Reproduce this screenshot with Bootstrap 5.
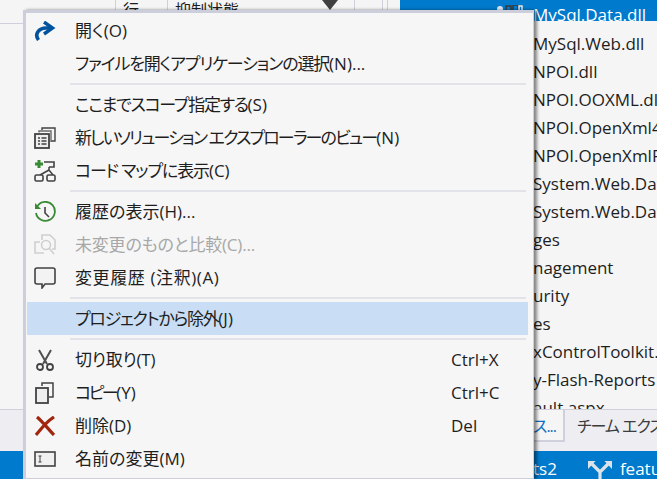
<!DOCTYPE html>
<html lang="ja">
<head>
<meta charset="utf-8">
<link href="https://cdn.jsdelivr.net/npm/bootstrap@5.3.0/dist/css/bootstrap.min.css" rel="stylesheet">
<style>
html,body{margin:0;height:479px;width:657px;overflow:hidden;background:#f5f5f5}
body{font-family:"Open Sans","Noto Sans CJK JP",sans-serif;font-size:17px;font-feature-settings:"palt";color:#1e1e1e}
.vs-stage{width:657px;height:479px;position:relative;overflow:hidden}
.vs-main{height:409px}
.left-pane{width:400px;flex:none;background:#f5f5f5}
.hdr-row{height:24px;border-bottom:1px solid #cfd0dc;font-size:16px;line-height:20px;overflow:hidden}
.hdr-cell{height:24px;border-right:1px solid #cfd0dc;padding-left:7px;white-space:nowrap;overflow:hidden}
.w1{width:116px;padding:0}.w2{width:52px}.w3{width:187px;position:relative}.w4{width:28px;padding:0}.w5{width:5px;padding:0}.w6{width:12px;padding:0;border:0}
.sort-tri{position:absolute;left:154px;top:0;width:0;height:0;border-left:8px solid transparent;border-right:8px solid transparent;border-top:10px solid #404040}
.tree-pane{flex:1;min-width:0;overflow:hidden;background:#f5f5f5}
.tree-row{height:28px;line-height:28px;padding-left:133px;white-space:nowrap;font-size:17px}
.tree-sel{background:#007acc;color:#fff;height:21px;line-height:30px;margin-bottom:9px;overflow:hidden;position:relative}
.peek-ic{position:absolute;left:97px;top:5px}
.tab-strip{height:42px;background:#eeeef2;border-top:1px solid #cfd0dc;padding-left:530px;font-size:16px;white-space:nowrap;overflow:hidden}
.tab-sel{width:35px;height:32px;flex:none;background:#f5f5f5;border-right:2px solid #cfd0dc;border-bottom:2px solid #cfd0dc;color:#0e70c0;padding-left:3px;line-height:33px;overflow:hidden;letter-spacing:-1px}
.tab-team{padding-left:12px;line-height:33px;color:#3c3c3c;letter-spacing:-1px}
.status-strip{height:28px;background:#007acc;color:#fff;font-size:17px;line-height:36px;padding-left:533px;white-space:nowrap;overflow:hidden;gap:31px}
.y-ic{flex:none;align-self:flex-start;margin-top:9px}
.vs-menu.dropdown-menu{display:block;position:absolute;left:23px;top:10px;width:511px;height:469px;min-width:0;background:#f6f6f6;border:3px solid #cccedb;border-right-width:1px;border-bottom-width:1px;border-radius:0;box-shadow:3px 0 3px rgba(0,0,0,.45);padding:1px 5px 0 1px;margin:0;font-size:17px;color:#1e1e1e}
.vs-menu .dropdown-item{height:33px;padding:0 0 0 1px;display:flex;align-items:center;white-space:nowrap;position:relative;color:#1e1e1e;line-height:22px}
.vs-menu .dropdown-item.disabled{color:#a8a8a8}
.vs-menu .dropdown-item.hot{background:#c9def5}
.vs-menu .dropdown-divider{height:2px;border:0;background:#e1e3e8;margin:3px 2px 3px 43px;opacity:1}
.ic{width:47px;flex:none;display:flex;justify-content:center;padding-right:13px}
.ic svg{display:block;flex:none}
.key{position:absolute;left:424px;font-size:17px;letter-spacing:0}
.sp-a{letter-spacing:-1.150px}
.sp-b{letter-spacing:-1.850px}
.sp-c{letter-spacing:-1.300px}
.sp-d{letter-spacing:-2.500px}
.sp-e{letter-spacing:-.2px}
.sp-f{letter-spacing:.6px}
.lat{letter-spacing:0}
</style>
</head>
<body>
<div class="vs-stage">
  <div class="vs-main d-flex">
    <div class="left-pane">
      <div class="hdr-row d-flex">
        <div class="hdr-cell w1"></div>
        <div class="hdr-cell w2">行</div>
        <div class="hdr-cell w3">抑制状態<span class="sort-tri"></span></div>
        <div class="hdr-cell w4"></div>
        <div class="hdr-cell w5"></div>
        <div class="hdr-cell w6"></div>
      </div>
    </div>
    <div class="tree-pane">
      <div class="tree-row tree-sel">MySql.Data.dll<svg class="peek-ic" width="26" height="6" viewBox="0 0 26 6"><circle cx="3" cy="4" r="3" fill="#dfe8f2"/><path d="M9 6V1h5v5M16 6V0h5v6" fill="none" stroke="#3a3a3a" stroke-width="1.500"/><path d="M22 6V1h3v5" fill="none" stroke="#e8e8e8" stroke-width="1.500"/></svg></div>
      <div class="tree-row">MySql.Web.dll</div>
      <div class="tree-row">NPOI.dll</div>
      <div class="tree-row">NPOI.OOXML.dll</div>
      <div class="tree-row">NPOI.OpenXml4Net.dll</div>
      <div class="tree-row">NPOI.OpenXmlFormats.dll</div>
      <div class="tree-row">System.Web.DataVisualization</div>
      <div class="tree-row">System.Web.DataVisualization</div>
      <div class="tree-row">ges</div>
      <div class="tree-row">nagement</div>
      <div class="tree-row">urity</div>
      <div class="tree-row">es</div>
      <div class="tree-row">xControlToolkit.dll</div>
      <div class="tree-row">y-Flash-Reports</div>
      <div class="tree-row">ault.aspx</div>
    </div>
  </div>
  <div class="tab-strip d-flex">
    <div class="tab-sel">ス...</div>
    <div class="tab-team">チーム エクスプローラー</div>
  </div>
  <div class="status-strip d-flex">
    <span>ts2</span>
    <span class="d-flex gap-2">
      <svg width="24" height="24" viewBox="0 0 24 24" class="y-ic"><path d="M4 4l8 8v12M20 4l-8 8" fill="none" stroke="#dce4ea" stroke-width="3.200"/><path d="M0 1h7.500L0 9zM24 1h-7.500L24 9z" fill="#dce4ea"/></svg>
      <span>feature</span>
    </span>
  </div>

  <ul class="dropdown-menu vs-menu list-unstyled">
    <li><a class="dropdown-item"><span class="ic"><svg width="22" height="20" viewBox="0 0 22 20"><path d="M4.500 19C0 13 5 7 12 7h6" fill="none" stroke="#00539c" stroke-width="3.600"/><path d="M10 1l8.500 6-8.500 6" fill="none" stroke="#00539c" stroke-width="3.400"/></svg></span>開く(O)</a></li>
    <li><a class="dropdown-item"><span class="ic"></span><span class="sp-a">ファイルを開くアプリケーションの選択<span class="lat">(N)...</span></span></a></li>
    <li><hr class="dropdown-divider"></li>
    <li><a class="dropdown-item"><span class="ic"></span><span class="sp-c">ここまでスコープ指定する<span class="lat">(S)</span></span></a></li>
    <li><a class="dropdown-item"><span class="ic"><svg width="22" height="22" viewBox="0 0 22 22"><path d="M8 3V1h13v13h-4" fill="none" stroke="#424242" stroke-width="1.400"/><path d="M5 5.500V4h12v11" fill="none" stroke="#6a6a6a" stroke-width="1.400"/><rect x="1" y="7" width="14" height="14" fill="#eee" stroke="#424242" stroke-width="1.800"/><path d="M4 11h2M7.500 11h5M4 14h2M7.500 14h5M4 17h2M7.500 17h5" stroke="#424242" stroke-width="1.300"/></svg></span><span class="sp-b">新しいソリューション エクスプローラーのビュー<span class="lat">(N)</span></span></a></li>
    <li><a class="dropdown-item"><span class="ic"><svg width="22" height="22" viewBox="0 0 22 22"><path d="M5 0v8M1 4h8" stroke="#388a34" stroke-width="3"/><path d="M10 2h10v5h-5" fill="none" stroke="#424242" stroke-width="1.600"/><path d="M15 7v3M15 10l-9 5M15 10l4 5" fill="none" stroke="#424242" stroke-width="1.500"/><rect x="1" y="15" width="8" height="6" rx="1.500" fill="#f6f6f6" stroke="#424242" stroke-width="1.600"/><rect x="13" y="15" width="8" height="6" rx="1.500" fill="#f6f6f6" stroke="#424242" stroke-width="1.600"/></svg></span><span class="sp-a">コード マップに表示<span class="lat">(C)</span></span></a></li>
    <li><hr class="dropdown-divider"></li>
    <li><a class="dropdown-item"><span class="ic"><svg width="22" height="22" viewBox="0 0 22 22"><path d="M3.500 5A9.500 9.500 0 1 1 2 12" fill="none" stroke="#388a34" stroke-width="1.800"/><path d="M1 2v6h6z" fill="#388a34"/><path d="M11 6v6l4 4" fill="none" stroke="#424242" stroke-width="1.600"/></svg></span>履歴の表示(H)...</a></li>
    <li><a class="dropdown-item disabled"><span class="ic"><svg width="22" height="22" viewBox="0 0 22 22" fill="none" stroke="#cfcfcf" stroke-width="1.600"><path d="M6 8H1v11h9"/><path d="M8 6V1h8l5 5v9h-3"/><circle cx="12" cy="11" r="4.500"/><path d="M15 14l5 6"/></svg></span><span class="sp-e">未変更のものと比較(C)...</span></a></li>
    <li><a class="dropdown-item"><span class="ic"><svg width="22" height="22" viewBox="0 0 22 22"><path d="M3 1h16a2 2 0 0 1 2 2v12a2 2 0 0 1-2 2H11l-3 4v-4H3a2 2 0 0 1-2-2V3a2 2 0 0 1 2-2z" fill="#f3f3f3" stroke="#424242" stroke-width="1.600"/></svg></span><span class="sp-f">変更履歴 (注釈)(A)</span></a></li>
    <li><hr class="dropdown-divider"></li>
    <li><a class="dropdown-item hot"><span class="ic"></span><span class="sp-c">プロジェクトから除外<span class="lat">(J)</span></span></a></li>
    <li><hr class="dropdown-divider"></li>
    <li><a class="dropdown-item"><span class="ic"><svg width="20" height="22" viewBox="0 0 20 22"><path d="M4 1l8 14M16 1L8 15" stroke="#505050" stroke-width="2"/><circle cx="5" cy="18" r="3" fill="none" stroke="#424242" stroke-width="1.800"/><circle cx="15" cy="18" r="3" fill="none" stroke="#424242" stroke-width="1.800"/></svg></span><span class="sp-e">切り取り(T)</span><span class="key">Ctrl+X</span></a></li>
    <li><a class="dropdown-item"><span class="ic"><svg width="20" height="22" viewBox="0 0 20 22"><path d="M7 4V1h11v14h-4" fill="none" stroke="#424242" stroke-width="1.500"/><rect x="1" y="6" width="12" height="15" fill="#eee" stroke="#424242" stroke-width="1.800"/></svg></span><span class="sp-d">コピー<span class="lat">(Y)</span></span><span class="key">Ctrl+C</span></a></li>
    <li><a class="dropdown-item"><span class="ic"><svg width="22" height="20" viewBox="0 0 22 20"><path d="M2 19C7 13 12 6 20 1M3 1c6 5 11 12 17 18" fill="none" stroke="#a1260d" stroke-width="3.200"/></svg></span>削除(D)<span class="key">Del</span></a></li>
    <li><a class="dropdown-item"><span class="ic"><svg width="22" height="16" viewBox="0 0 22 16"><rect x="1" y="1" width="20" height="14" fill="#f0f0f0" stroke="#424242" stroke-width="1.600"/><path d="M4.500 5h3M4.500 11h3M6 5v6" stroke="#424242" stroke-width="1"/></svg></span>名前の変更(M)</a></li>
  </ul>
</div>
<script src="https://cdn.jsdelivr.net/npm/bootstrap@5.3.0/dist/js/bootstrap.bundle.min.js"></script>
</body>
</html>
